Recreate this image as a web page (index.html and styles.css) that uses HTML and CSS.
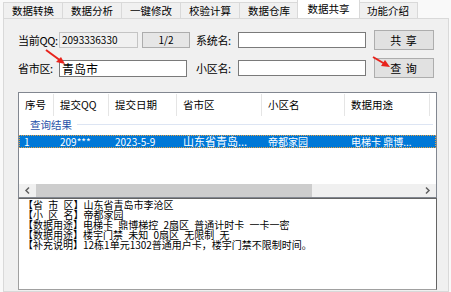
FILE: index.html
```html
<!DOCTYPE html>
<html lang="zh-CN">
<head>
  <meta charset="UTF-8" />
  <title>数据共享</title>
  <link rel="stylesheet" href="styles.css">
</head>
<body>
  <div class="tabs">
    <div class="tab">数据转换</div>
    <div class="tab">数据分析</div>
    <div class="tab">一键修改</div>
    <div class="tab">校验计算</div>
    <div class="tab">数据仓库</div>
    <div class="tab active">数据共享</div>
    <div class="tab">功能介绍</div>
  </div>

  <div class="panel">
    <!-- 查询条件 -->
    <div class="row">
      <label class="lbl">当前QQ:</label>
      <div class="box ro qq">2093336330</div>
      <div class="box page">1/2</div>
      <label class="lbl lbl2">系统名:</label>
      <input class="txt wide" type="text">
      <button class="btn">共 享</button>
    </div>
    <div class="row">
      <label class="lbl">省市区:</label>
      <input class="txt wide city" type="text" value="青岛市">
      <label class="lbl lbl2 sp">小区名:</label>
      <input class="txt wide" type="text">
      <button class="btn">查 询</button>
    </div>

    <!-- 结果列表 -->
    <div class="list">
      <div class="head">
        <div class="c c1">序号</div>
        <div class="c c2">提交QQ</div>
        <div class="c c3">提交日期</div>
        <div class="c c4">省市区</div>
        <div class="c c5">小区名</div>
        <div class="c c6">数据用途</div>
        <div class="c c7"></div>
      </div>
      <div class="group"><span>查询结果</span><i></i></div>
      <div class="item sel">
        <div class="c c1">1</div>
        <div class="c c2">209***</div>
        <div class="c c3">2023-5-9</div>
        <div class="c c4 big">山东省青岛...</div>
        <div class="c c5">帝都家园</div>
        <div class="c c6">电梯卡 鼎博...</div>
      </div>
      <div class="fill"></div>
      <div class="hscroll">
        <svg class="arr" width="17" height="13" viewBox="0 0 17 13"><path d="M10 3.5 L7 6.5 L10 9.5" stroke="#606060" stroke-width="1.5" fill="none"/></svg>
        <div class="thumb"></div>
        <svg class="arr r" width="17" height="13" viewBox="0 0 17 13"><path d="M7 3.5 L10 6.5 L7 9.5" stroke="#606060" stroke-width="1.5" fill="none"/></svg>
      </div>
    </div>

    <div class="memo">【省 市 区】山东省青岛市李沧区
【小 区 名】帝都家园
【数据用途】电梯卡 鼎博梯控 2扇区 普通计时卡 一卡一密
【数据用途】楼宇门禁 未知 0扇区 无限制 无
【补充说明】12栋1单元1302普通用户卡，楼宇门禁不限制时间。</div>
  </div>

  <!-- 标注箭头 -->
  <svg class="mark m1" width="24" height="20" viewBox="0 0 24 20">
    <path d="M2 2 L17 13" stroke="#e8231c" stroke-width="2" fill="none"/>
    <path d="M21 16 L12 14 L17 9 Z" fill="#e8231c"/>
  </svg>
  <svg class="mark m2" width="24" height="16" viewBox="0 0 24 16">
    <path d="M2 2 L14 9" stroke="#e8231c" stroke-width="2" fill="none"/>
    <path d="M19 12 L10 11 L14 5 Z" fill="#e8231c"/>
  </svg>
</body>
</html>
```

FILE: styles.css
```css
body{margin:0;width:451px;height:292px;overflow:hidden;background:#f9f9f9;font-family:"Noto Sans CJK SC","Liberation Sans",sans-serif;font-size:11px;color:#000;position:relative}
.tabs{display:flex;align-items:flex-end;height:18px;padding-left:3px}
.tab{width:60px;height:16px;border:1px solid #d9d9d9;border-bottom:none;margin-right:-1px;background:#f0f0f0;text-align:center;font-size:10.5px;line-height:16px;box-sizing:border-box}
.tab.active{background:#fff;height:19px;width:63px;margin:0 -2px 0 -1px;position:relative;z-index:1;line-height:17px}
.panel{margin:0 2px 0 3px;height:274px;border:1px solid #d9d9d9;box-sizing:border-box;background:#f0f0f0;padding:11px 0 0 14px;display:flex;flex-direction:column}
.row{display:flex;align-items:center;height:20px;margin-bottom:8px}
.lbl{width:41px;flex:none;font-size:11px;white-space:nowrap;letter-spacing:-0.3px}
.lbl2{width:42px}
.sp{margin-left:9px}
.box{height:16px;box-sizing:border-box;border:1px solid #c4c4c4;font-size:10px;line-height:14px;padding-left:2px}
.qq{width:79px;background:#f0f0f0}
.page{width:48px;margin:0 6px 0 4px;background:#e6e6e6;border-color:#adadad;text-align:center;padding:0}
.txt{width:128px;height:16px;box-sizing:border-box;border:1px solid #7a7a7a;background:#fff;padding:0 2px;font:12px "Noto Sans CJK SC",sans-serif;margin:0}
.city{height:17px}
.btn{width:60px;height:20px;margin-left:8px;border:1px solid #adadad;background:#e1e1e1;font:11px "Noto Sans CJK SC",sans-serif;padding:0;letter-spacing:1px}
.list{margin-top:6px;width:419px;height:106px;flex:none;box-sizing:border-box;border:1px solid #828790;background:#fff;display:flex;flex-direction:column;overflow:hidden;font-size:10px}
.head,.item{display:flex;flex:none}
.head{height:23px;align-items:center}
.head .c{height:22px;line-height:22px;border-right:1px solid #e5e5e5;font-size:10.5px}
.c{flex:none;box-sizing:border-box;padding-left:6px;white-space:nowrap}
.c1{width:35px}.c2{width:55px}.c3{width:68px}.c4{width:85px}.c5{width:83px}.c6{width:85px}.c7{width:6px}
.group{display:flex;align-items:center;height:16px;padding-left:11px;color:#1e4fa8;font-size:10.5px}
.group i{flex:1;height:1px;background:#dde5f3;margin:0 3px 0 5px}
.item{height:13px;margin-top:3px;line-height:13px;color:#fff}
.sel{background:#0078d7;outline:1px dotted #e8a040;outline-offset:-1px;width:417px}
.item .c1{padding-left:5px}
.big{font-size:11px}
.fill{flex:1}
.hscroll{height:13px;flex:none;background:#f0f0f0;display:flex;align-items:center;position:relative}
.arr{flex:none;display:block}
.arr.r{margin-left:auto}
.thumb{position:absolute;left:17px;width:276px;top:0;bottom:0;background:#cdcdcd}
.memo{width:419px;height:92px;flex:none;box-sizing:border-box;border:1px solid #a0a0a0;border-top-color:#646464;border-right-color:#646464;background:#fff;padding:1px 4px;font-size:10px;line-height:10px;white-space:pre;word-spacing:3px;overflow:hidden}
.mark{position:absolute}
.m1{left:44px;top:48px}
.m2{left:371px;top:55px}
```
